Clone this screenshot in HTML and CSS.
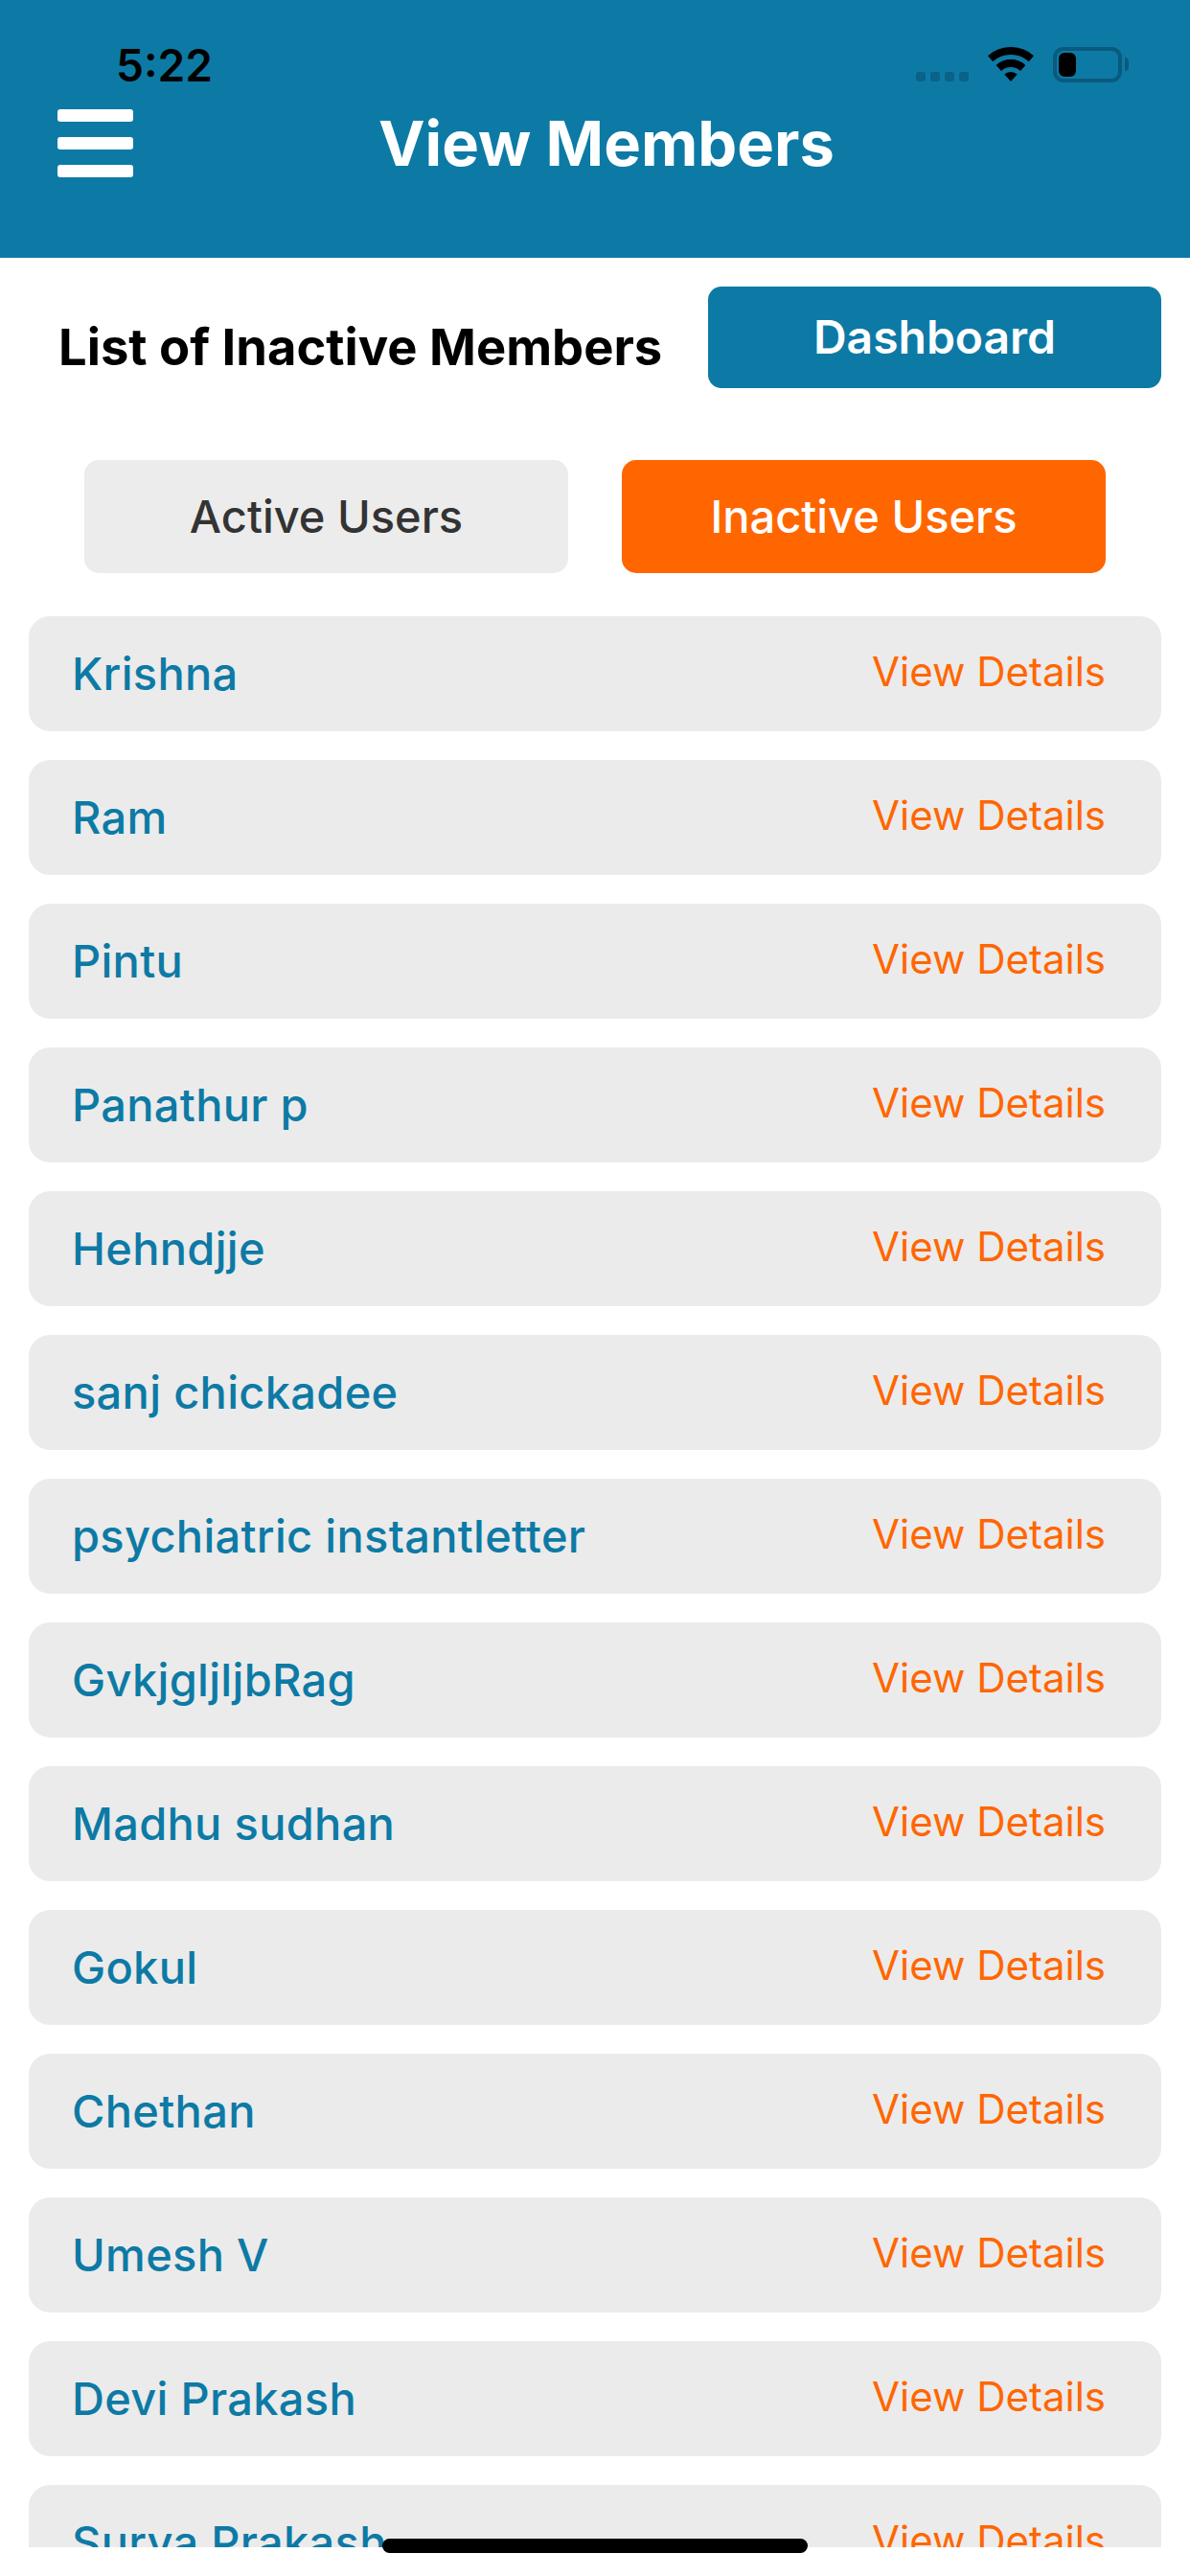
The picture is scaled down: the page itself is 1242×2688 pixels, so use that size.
FILE: index.html
```html
<!DOCTYPE html>
<html lang="en">

<head>
    <meta charset="UTF-8">
    <meta name="viewport" content="width=device-width, initial-scale=1.0">
    <title>View Members</title>
    <link rel="stylesheet" href="styles.css">
</head>

<body>
    <div class="screen">
        <header class="header">
            <div class="status-bar">
                <span class="time">5:22</span>
                <div class="status-icons">
                    <div class="signal"><i></i><i></i><i></i><i></i></div>
                    <svg class="wifi" viewBox="0 0 48 36" width="48" height="36">
                        <path d="M2.6 12.2A32 32 0 0 1 45.4 12.2" fill="none" stroke="#000" stroke-width="8"/>
                        <path d="M11.3 21.9A19 19 0 0 1 36.7 21.9" fill="none" stroke="#000" stroke-width="8"/>
                        <path d="M24 36L17.3 28.6A10 10 0 0 1 30.7 28.6Z" fill="#000"/>
                    </svg>
                    <div class="battery"><div class="battery-level"></div></div>
                    <div class="battery-nub"></div>
                </div>
            </div>
            <div class="title-bar">
                <div class="menu-icon"><i></i><i></i><i></i></div>
                <h1 class="title">View Members</h1>
            </div>
        </header>

        <main class="content">
            <div class="top-row">
                <h2 class="list-title">List of Inactive Members</h2>
                <a class="dashboard-btn">Dashboard</a>
            </div>

            <div class="tabs">
                <a class="tab">Active Users</a>
                <a class="tab tab-active">Inactive Users</a>
            </div>

            <div class="member-list">
                <div class="member"><span class="member-name">Krishna</span><a class="member-link">View Details</a></div>
                <div class="member"><span class="member-name">Ram</span><a class="member-link">View Details</a></div>
                <div class="member"><span class="member-name">Pintu</span><a class="member-link">View Details</a></div>
                <div class="member"><span class="member-name">Panathur p</span><a class="member-link">View Details</a></div>
                <div class="member"><span class="member-name">Hehndjje</span><a class="member-link">View Details</a></div>
                <div class="member"><span class="member-name">sanj chickadee</span><a class="member-link">View Details</a></div>
                <div class="member"><span class="member-name">psychiatric instantletter</span><a class="member-link">View Details</a></div>
                <div class="member"><span class="member-name">GvkjgljljbRag</span><a class="member-link">View Details</a></div>
                <div class="member"><span class="member-name">Madhu sudhan</span><a class="member-link">View Details</a></div>
                <div class="member"><span class="member-name">Gokul</span><a class="member-link">View Details</a></div>
                <div class="member"><span class="member-name">Chethan</span><a class="member-link">View Details</a></div>
                <div class="member"><span class="member-name">Umesh V</span><a class="member-link">View Details</a></div>
                <div class="member"><span class="member-name">Devi Prakash</span><a class="member-link">View Details</a></div>
                <div class="member"><span class="member-name">Surya Prakash</span><a class="member-link">View Details</a></div>
            </div>
        </main>

        <div class="home-indicator"></div>
    </div>
</body>

</html>
```

FILE: styles.css
```css
* {
    box-sizing: border-box;
}

body {
    margin: 0;
    background: #fff;
    font-family: Inter, "Liberation Sans", sans-serif;
}

.screen {
    position: relative;
    width: 1242px;
    height: 2688px;
    overflow: hidden;
    display: flex;
    flex-direction: column;
}

.header {
    height: 269px;
    flex: none;
    background: #0d7aa5;
}

.status-bar {
    display: flex;
    justify-content: space-between;
    align-items: flex-start;
    height: 114px;
    padding: 49px 64px 0 121px;
}

.time {
    font-size: 46px;
    font-weight: 600;
    line-height: 38px;
    color: #000;
}

.status-icons {
    display: flex;
    align-items: flex-start;
}

.signal {
    display: flex;
    gap: 5px;
    margin-top: 26px;
    margin-right: 20px;
}

.signal i {
    display: block;
    width: 10px;
    height: 10px;
    border-radius: 3px;
    background: #0a6288;
}

.battery {
    width: 72px;
    height: 37px;
    margin-left: 20px;
    padding: 2px;
    border: 4px solid #0a5a7d;
    border-radius: 11px;
}

.battery-level {
    width: 18px;
    height: 25px;
    border-radius: 6px;
    background: #000;
}

.battery-nub {
    width: 4px;
    height: 14px;
    margin-top: 11px;
    margin-left: 3px;
    border-radius: 0 7px 7px 0;
    background: #0a5a7d;
}

.title-bar {
    display: flex;
    align-items: flex-start;
    padding-left: 60px;
}

.menu-icon {
    display: flex;
    flex-direction: column;
    gap: 16px;
    width: 79px;
}

.menu-icon i {
    display: block;
    height: 13px;
    border-radius: 3px;
    background: #fff;
}

.title {
    margin: 4px 0 0 256px;
    font-size: 65px;
    font-weight: 700;
    line-height: 64px;
    color: #fff;
}

.content {
    flex: 1;
    min-height: 0;
    display: flex;
    flex-direction: column;
}

.top-row {
    display: flex;
    justify-content: space-between;
    align-items: center;
    margin-top: 30px;
    padding: 0 30px 0 61px;
}

.list-title {
    margin: 20px 0 0;
    font-size: 52.5px;
    font-weight: 700;
    color: #000;
}

.dashboard-btn {
    display: flex;
    justify-content: center;
    align-items: center;
    width: 473px;
    height: 106px;
    padding-bottom: 2px;
    border-radius: 14px;
    background: #0d7aa5;
    font-size: 48px;
    font-weight: 600;
    color: #fff;
}

.tabs {
    display: flex;
    justify-content: center;
    gap: 56px;
    margin-top: 75px;
}

.tab {
    display: flex;
    justify-content: center;
    align-items: center;
    width: 505px;
    height: 118px;
    padding-bottom: 2px;
    border-radius: 15px;
    background: #ececec;
    font-size: 47px;
    font-weight: 500;
    color: #333;
}

.tab-active {
    background: #ff6600;
    color: #fff;
}

.member-list {
    height: 2015px;
    flex: none;
    margin-top: 45px;
    overflow: hidden;
    display: flex;
    flex-direction: column;
    gap: 30px;
    padding: 0 30px;
}

.member {
    flex: none;
    display: flex;
    justify-content: space-between;
    align-items: center;
    height: 120px;
    padding: 0 58px 0 45px;
    border-radius: 22px;
    background: #ebebeb;
}

.member-name {
    padding-bottom: 2px;
    font-size: 47px;
    font-weight: 500;
    letter-spacing: 0.3px;
    color: #0d7aa5;
}

.member-link {
    padding-bottom: 5px;
    font-size: 42px;
    color: #ff6600;
}

.home-indicator {
    position: absolute;
    left: 399px;
    top: 2649px;
    width: 444px;
    height: 15px;
    border-radius: 8px;
    background: #000;
}
```
